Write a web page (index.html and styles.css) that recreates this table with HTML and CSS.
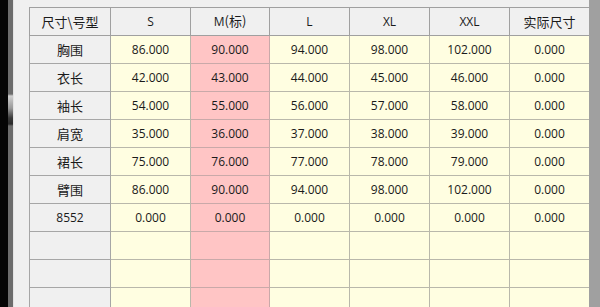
FILE: index.html
```html
<!DOCTYPE html>
<html lang="zh-CN">
<head>
<meta charset="utf-8">
<title>尺寸表</title>
<link rel="stylesheet" href="styles.css">
</head>
<body>
<div class="screen">
  <div class="edge-black"></div>
  <div class="edge-gray"></div>
  <div class="edge-light"></div>
  <div class="panel">
    <table class="grid">
      <colgroup>
        <col class="c-first"><col class="c"><col class="c-std"><col class="c"><col class="c"><col class="c"><col class="c">
      </colgroup>
      <thead>
        <tr>
          <th class="cjk">尺寸\号型</th>
          <th>S</th>
          <th>M<span class="cjk">(标)</span></th>
          <th>L</th>
          <th>XL</th>
          <th>XXL</th>
          <th class="cjk">实际尺寸</th>
        </tr>
      </thead>
      <tbody>
        <tr><th class="cjk">胸围</th><td>86.000</td><td class="std">90.000</td><td>94.000</td><td>98.000</td><td>102.000</td><td>0.000</td></tr>
        <tr><th class="cjk">衣长</th><td>42.000</td><td class="std">43.000</td><td>44.000</td><td>45.000</td><td>46.000</td><td>0.000</td></tr>
        <tr><th class="cjk">袖长</th><td>54.000</td><td class="std">55.000</td><td>56.000</td><td>57.000</td><td>58.000</td><td>0.000</td></tr>
        <tr><th class="cjk">肩宽</th><td>35.000</td><td class="std">36.000</td><td>37.000</td><td>38.000</td><td>39.000</td><td>0.000</td></tr>
        <tr><th class="cjk">裙长</th><td>75.000</td><td class="std">76.000</td><td>77.000</td><td>78.000</td><td>79.000</td><td>0.000</td></tr>
        <tr><th class="cjk">臂围</th><td>86.000</td><td class="std">90.000</td><td>94.000</td><td>98.000</td><td>102.000</td><td>0.000</td></tr>
        <tr><th>8552</th><td>0.000</td><td class="std">0.000</td><td>0.000</td><td>0.000</td><td>0.000</td><td>0.000</td></tr>
        <tr><th></th><td></td><td class="std"></td><td></td><td></td><td></td><td></td></tr>
        <tr><th></th><td></td><td class="std"></td><td></td><td></td><td></td><td></td></tr>
        <tr><th></th><td></td><td class="std"></td><td></td><td></td><td></td><td></td></tr>
      </tbody>
    </table>
  </div>
  <div class="edge-right"></div>
</div>
</body>
</html>
```
FILE: styles.css
```css
html, body {
  margin: 0;
  padding: 0;
  width: 600px;
  height: 307px;
  overflow: hidden;
  background: #f0f0f0;
}

.screen {
  display: flex;
  width: 600px;
  height: 307px;
  overflow: hidden;
}

.edge-black {
  flex: 0 0 8px;
  background: #050505;
}

.edge-gray {
  flex: 0 0 5px;
  background: linear-gradient(to bottom,
    #6c6c6c 0, #6c6c6c 94px,
    #d0d0d0 96px, #9a9a9a 108px, #3a3a3a 118px, #2a2a2a 124px,
    #6c6c6c 126px, #6c6c6c 100%);
}

.edge-light {
  flex: 0 0 1px;
  background: #e4e4e4;
}

.panel {
  flex: 0 0 575px;
  padding: 7px 0 0 15px;
  box-sizing: border-box;
  background: #f0f0f0;
  overflow: hidden;
}

.edge-right {
  flex: 1 1 auto;
  background: #a0a0a0;
}

.grid {
  table-layout: fixed;
  border-collapse: collapse;
  width: 560px;
  font-family: "Open Sans", "Noto Sans", "Noto Sans CJK SC", sans-serif;
  font-size: 12px;
  color: #1a1a1a;
}

.c-first { width: 81px; }
.c { width: 80px; }
.c-std { width: 79px; }

.grid th,
.grid td {
  height: 27px;
  padding: 0;
  text-align: center;
  vertical-align: middle;
  border: 1px solid #a6a6a6;
  font-weight: normal;
  line-height: 16px;
}

.grid th {
  background: #f0f0f0;
}

.grid td {
  background: #fffee1;
  border-color: #b9b8ab;
}

.grid td.std {
  background: #ffc5c5;
  border-color: #c9a9a9;
}

.grid thead th {
  border-color: #a0a0a0;
}

.cjk {
  font-family: "Noto Sans CJK SC", "Noto Sans", sans-serif;
  font-size: 13px;
}
```
